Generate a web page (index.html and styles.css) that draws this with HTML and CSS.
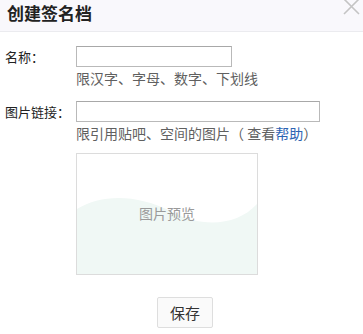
FILE: index.html
```html
<!DOCTYPE html>
<html>
<head>
<meta charset="utf-8">
<link rel="stylesheet" href="styles.css">
</head>
<body>
<div class="dialog">
  <div class="header">
    <span class="title">创建签名档</span>
    <span class="close">
      <svg width="18" height="16" viewBox="0 0 18 16"><path d="M1 -1 L16 14 M16 -1 L1 14" stroke="#c4c4c4" stroke-width="1.6" fill="none"/></svg>
    </span>
  </div>
  <div class="body">
    <div class="row">
      <label class="label">名称：</label>
      <div class="field">
        <div class="input short"></div>
        <div class="hint">限汉字、字母、数字、下划线</div>
      </div>
    </div>
    <div class="row row2">
      <label class="label">图片链接：</label>
      <div class="field">
        <div class="input long"></div>
        <div class="hint">限引用贴吧、空间的图片（ 查看<a class="help">帮助</a>）</div>
      </div>
    </div>
    <div class="preview-wrap">
      <div class="preview">
        <svg class="wave" width="180" height="120" viewBox="0 0 180 120" preserveAspectRatio="none">
          <path d="M0 55 C25 40 60 40 95 58 C125 74 160 72 180 50 L180 120 L0 120 Z" fill="#f0f8f5"/>
        </svg>
        <span class="ptext">图片预览</span>
      </div>
    </div>
    <div class="actions">
      <button class="save">保存</button>
    </div>
  </div>
</div>
</body>
</html>
```
FILE: styles.css
```css
html, body {
  margin: 0;
  padding: 0;
  background: #ffffff;
  font-family: "Noto Sans CJK SC", "Liberation Sans", sans-serif;
}
.dialog {
  width: 363px;
  height: 334px;
  overflow: hidden;
}
.header {
  height: 31px;
  background: #f9f8fc;
  border-bottom: 1px solid #ebebef;
  display: flex;
  justify-content: space-between;
  align-items: flex-start;
}
.title {
  font-size: 17px;
  font-weight: bold;
  color: #222;
  line-height: 25px;
  margin-left: 7px;
  padding-top: 0;
}
.close {
  margin-right: 2px;
  line-height: 0;
}
.body {
  padding-top: 14px;
}
.row {
  display: flex;
  align-items: flex-start;
}
.row2 {
  margin-top: 15px;
}
.label {
  width: 71px;
  padding-left: 5px;
  font-size: 13px;
  color: #222;
  line-height: 20px;
  margin-top: 1px;
}
.field {
  display: flex;
  flex-direction: column;
}
.input {
  height: 19px;
  border: 1px solid #b9b9b9;
  border-top-color: #a8a8a8;
  background: #fff;
}
.short { width: 154px; }
.long { width: 242px; }
.hint {
  margin-top: 4px;
  font-size: 14px;
  color: #606060;
  line-height: 15px;
}
.help {
  color: #2d64b3;
}
.preview-wrap {
  padding-left: 76px;
  margin-top: 12px;
}
.preview {
  position: relative;
  width: 180px;
  height: 120px;
  border: 1px solid #dcdcdc;
  display: flex;
  align-items: center;
  justify-content: center;
  background: #fff;
}
.wave {
  position: absolute;
  left: 0;
  top: 0;
}
.ptext {
  position: relative;
  font-size: 14px;
  color: #9a9a9a;
  margin-top: -2px;
}
.actions {
  display: flex;
  justify-content: flex-start;
  padding-left: 157px;
  margin-top: 22px;
}
.save {
  width: 56px;
  height: 31px;
  border: 1px solid #dedede;
  border-radius: 2px;
  background: #fafafa;
  font-family: "Noto Sans CJK SC", sans-serif;
  font-size: 15px;
  color: #333;
  padding: 0;
}
```
